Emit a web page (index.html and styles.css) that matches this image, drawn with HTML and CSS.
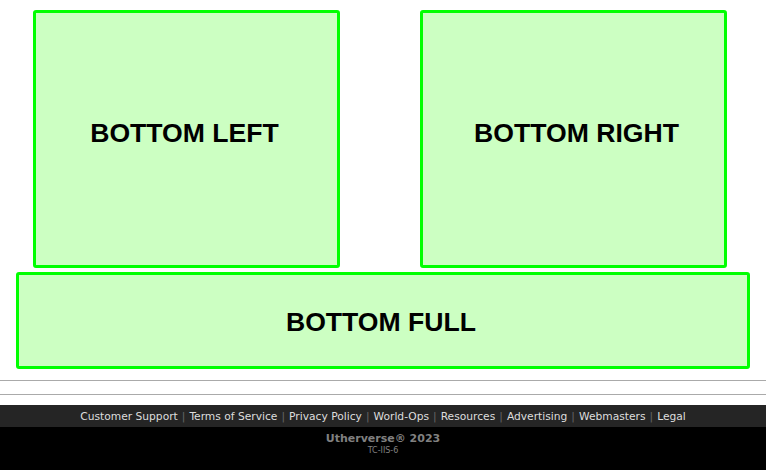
FILE: index.html
```html
<!DOCTYPE html>
<html>
<head>
<meta charset="utf-8">
<link rel="stylesheet" href="styles.css">
</head>
<body>
<div class="page">
  <div class="row">
    <div class="box half left"><span>BOTTOM LEFT</span></div>
    <div class="box half right"><span>BOTTOM RIGHT</span></div>
  </div>
  <div class="box full"><span>BOTTOM FULL</span></div>
</div>
<div class="rule rule1"></div>
<div class="rule rule2"></div>
<div class="links">
  <a>Customer Support</a><i>|</i><a>Terms of Service</a><i>|</i><a>Privacy Policy</a><i>|</i><a>World-Ops</a><i>|</i><a>Resources</a><i>|</i><a>Advertising</a><i>|</i><a>Webmasters</a><i>|</i><a>Legal</a>
</div>
<div class="bottom">
  <div class="copy">Utherverse® 2023</div>
  <div class="server">TC-IIS-6</div>
</div>
</body>
</html>
```

FILE: styles.css
```css
html, body {
  margin: 0;
  padding: 0;
  background: #ffffff;
}
.page {
  padding: 10px 16px 0 16px;
  display: flex;
  flex-direction: column;
  gap: 4px;
}
.row {
  display: flex;
  gap: 80px;
  padding-left: 17px;
}
.box {
  box-sizing: border-box;
  background: #ccffc2;
  border: 3px solid #00ff00;
  border-radius: 3px;
  display: flex;
  align-items: center;
  justify-content: center;
  font-family: "Liberation Sans", Arial, sans-serif;
  font-weight: bold;
  font-size: 26.6px;
  color: #000;
}
.half {
  width: 307px;
  height: 258px;
  padding-bottom: 12px;
}
.left {
  padding-right: 4px;
}
.right {
  padding-left: 6px;
}
.full {
  width: 734px;
  height: 97px;
  padding-top: 4px;
  padding-right: 4px;
}
.rule {
  height: 1px;
  background: #aaaaaa;
}
.rule1 { margin-top: 11px; }
.rule2 { margin-top: 13px; }
.links {
  margin-top: 10px;
  height: 22px;
  background: #252525;
  display: flex;
  justify-content: center;
  align-items: center;
  font-family: "DejaVu Sans", Verdana, sans-serif;
  font-size: 10.7px;
  color: #dddddd;
}
.links a {
  color: #dddddd;
}
.links i {
  font-style: normal;
  color: #666666;
  padding: 0 4px;
}
.bottom {
  background: #000;
  height: 50px;
  padding-top: 5px;
  box-sizing: border-box;
  text-align: center;
  font-family: "DejaVu Sans", Verdana, sans-serif;
  color: #808080;
}
.copy {
  font-weight: bold;
  font-size: 11px;
  line-height: 13px;
}
.server {
  font-size: 8px;
  line-height: 10px;
  margin-top: 1px;
}
```
